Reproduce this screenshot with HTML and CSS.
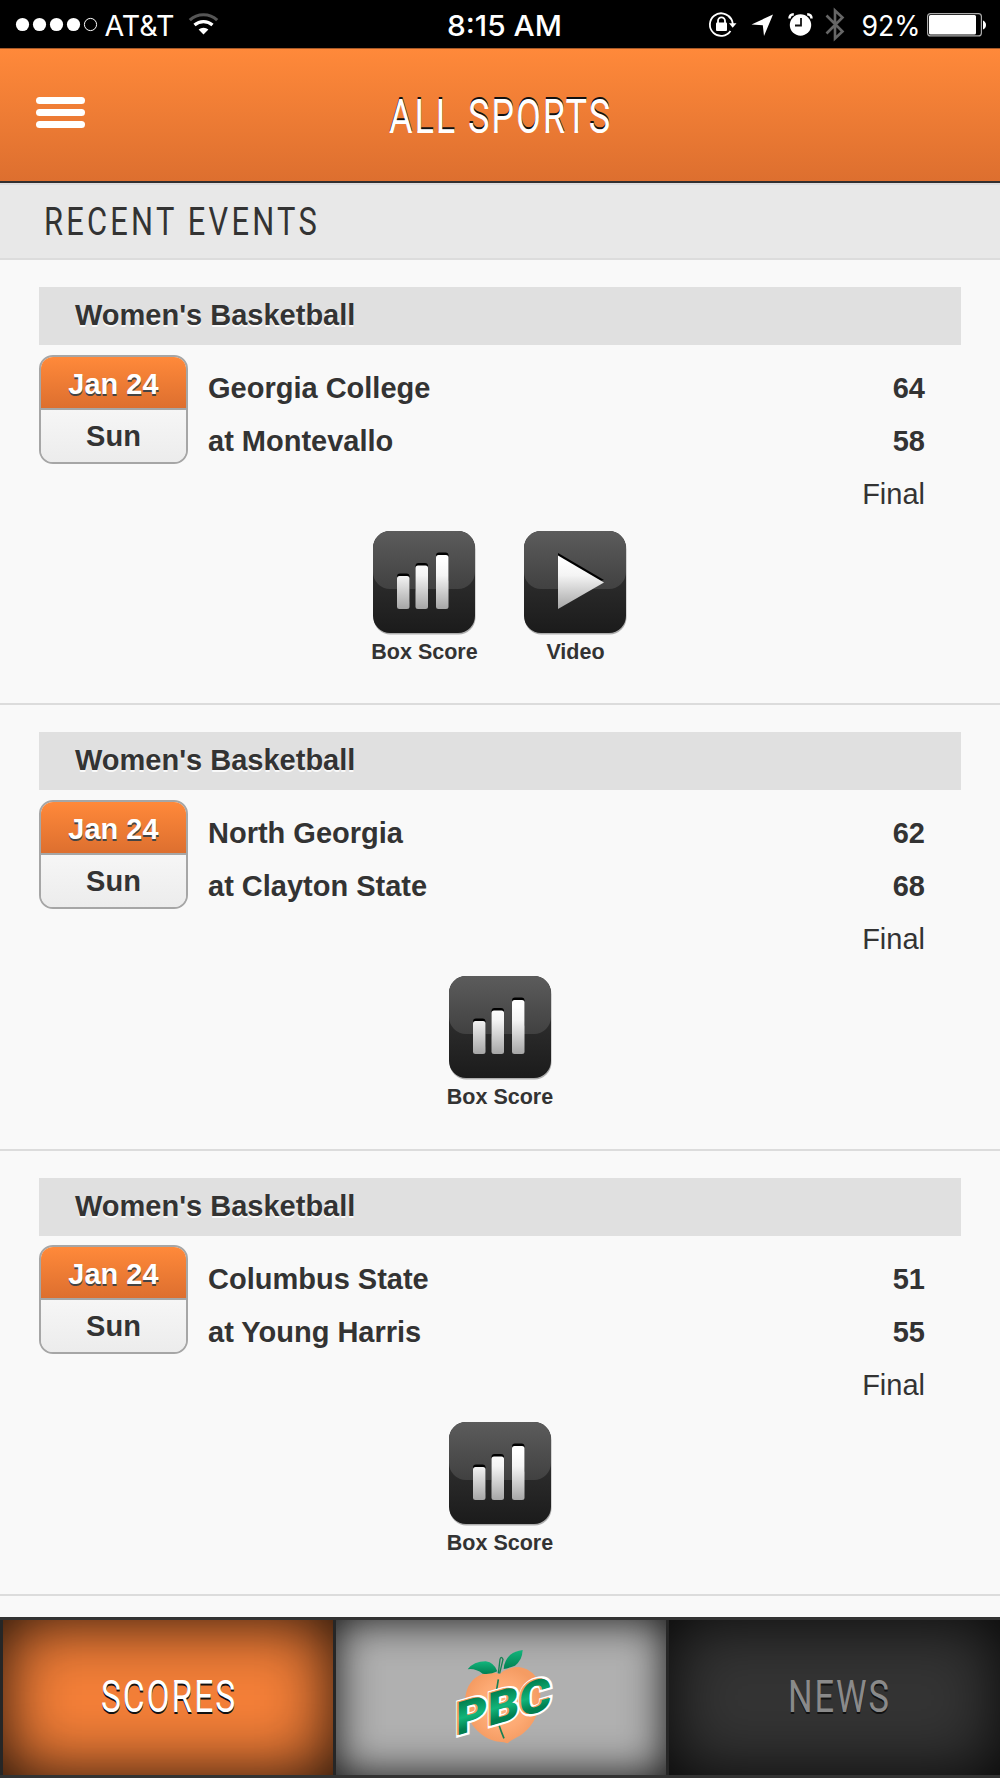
FILE: index.html
```html
<!DOCTYPE html>
<html lang="en">
<head>
<meta charset="utf-8">
<title>All Sports</title>
<link rel="stylesheet" href="styles.css">
</head>
<body>
<svg class="defs" width="0" height="0" aria-hidden="true">
  <defs>
    <linearGradient id="tile-low" x1="0" y1="0" x2="0" y2="1"><stop offset=".5" stop-color="#2b2b2b"/><stop offset="1" stop-color="#1b1b1b"/></linearGradient>
    <linearGradient id="tile-gloss" x1="0" y1="0" x2="0" y2="1"><stop offset=".25" stop-color="#5c5c5c"/><stop offset="1" stop-color="#414141"/></linearGradient>
    <linearGradient id="metal" gradientUnits="userSpaceOnUse" x1="0" y1="30" x2="0" y2="78"><stop offset="0" stop-color="#fff"/><stop offset=".3" stop-color="#f4f4f4"/><stop offset="1" stop-color="#a6a6a6"/></linearGradient>
    <clipPath id="tile-clip"><rect width="102" height="102" rx="17"/></clipPath>
    <g id="tile">
      <rect x=".5" y="1.500" width="102" height="102" rx="17" fill="#000" opacity=".3"/>
      <rect width="102" height="102" rx="17" fill="url(#tile-low)"/>
      <rect y="-20" width="102" height="78" rx="17" fill="url(#tile-gloss)" clip-path="url(#tile-clip)"/>
    </g>
    <symbol id="box-score" viewBox="0 0 104 105">
      <use href="#tile"/>
      <g fill="#000"><rect x="24" y="42.500" width="12.500" height="30" rx="3"/><rect x="42.500" y="32" width="12.500" height="30" rx="3"/><rect x="63" y="21.500" width="12.500" height="30" rx="3"/></g>
      <g fill="url(#metal)"><rect x="24" y="45" width="12.500" height="33" rx="2.500"/><rect x="42.500" y="34.500" width="12.500" height="43.500" rx="2.500"/><rect x="63" y="24" width="12.500" height="54" rx="2.500"/></g>
    </symbol>
    <symbol id="video" viewBox="0 0 104 105">
      <use href="#tile"/>
      <path d="M34 22L80 49L34 60Z" fill="#000"/>
      <path d="M34 24.500L80 51.500L34 78Z" fill="url(#metal)"/>
    </symbol>
  </defs>
</svg>

<div class="status">
  <div class="status-left">
    <svg width="230" height="48">
      <g fill="#fff"><circle cx="22.500" cy="24.500" r="6.600"/><circle cx="39.500" cy="24.500" r="6.600"/><circle cx="56.500" cy="24.500" r="6.600"/><circle cx="73.500" cy="24.500" r="6.600"/></g>
      <circle cx="90.500" cy="24.500" r="6.100" fill="none" stroke="#fff" stroke-width="1"/>
      <text class="st" x="104.500" y="35.500" textLength="70" lengthAdjust="spacingAndGlyphs">AT&amp;T</text>
      <g fill="none" stroke="#fff" stroke-width="3.200"><path d="M189.800 20.200A20 20 0 0 1 217.200 20.200" stroke="#555"/><path d="M194.500 25A13.500 13.500 0 0 1 212.500 25"/></g>
      <path d="M198.600 29.500A7.500 7.500 0 0 1 208.400 29.500L203.500 34.500Z" fill="#fff"/>
    </svg>
  </div>
  <svg width="130" height="48"><text class="st st-time" x="12" y="35.500" textLength="115" lengthAdjust="spacingAndGlyphs">8:15 AM</text></svg>
  <div class="status-right">
    <svg width="300" height="48">
      <g transform="translate(-700)">
        <path d="M731 19A11.300 11.300 0 1 0 730.500 31" fill="none" stroke="#fff" stroke-width="1.800"/>
        <path d="M728.500 16A11.300 11.300 0 0 1 732.800 24" fill="none" stroke="#fff" stroke-width="1.800"/>
        <path d="M729 23.300H736.500L732.700 27.700Z" fill="#fff"/>
        <rect x="716" y="22.500" width="11" height="8.500" rx="1" fill="#fff"/>
        <path d="M718 23V20.800A3.500 3.500 0 0 1 725 20.800V23" fill="none" stroke="#fff" stroke-width="1.800"/>
        <path d="M773 14.500L764 36L762.800 25.300L751.500 24.400Z" fill="#fff"/>
        <circle cx="800.500" cy="25" r="10.700" fill="#fff"/>
        <path d="M789.500 18.500Q789.500 14.500 793.800 14.200M811.500 18.500Q811.500 14.500 807.200 14.200" fill="none" stroke="#fff" stroke-width="2.500"/>
        <path d="M801 18V25.500H795" fill="none" stroke="#111" stroke-width="1.800"/>
        <path d="M826.500 15.500L842.500 31.500L835 38.500V10.500L842.500 17.500L826.500 33.500" fill="none" stroke="#666" stroke-width="2.600"/>
        <text class="st" x="861.500" y="35.500" textLength="59" lengthAdjust="spacingAndGlyphs">92%</text>
        <rect x="927.600" y="13.600" width="53.800" height="22.300" rx="3" fill="none" stroke="#aaa" stroke-width="1.200"/>
        <rect x="929" y="15" width="47" height="19.500" rx="1.500" fill="#fff"/>
        <path d="M983 20.500Q986 22 986 25Q986 28 983 29.500Z" fill="#fff"/>
      </g>
    </svg>
  </div>
</div>

<header class="header">
  <button class="menu" aria-label="Menu"><i></i><i></i><i></i></button>
  <svg class="title" width="230" height="60"><text class="narrow t-title" x="4" y="46.500" textLength="223" lengthAdjust="spacingAndGlyphs">ALL SPORTS</text></svg>
</header>

<div class="section"><svg width="290" height="50"><text class="narrow t-section" x="4" y="37.500" textLength="276" lengthAdjust="spacingAndGlyphs">RECENT EVENTS</text></svg></div>

<main class="events">
  <article class="event">
    <h2 class="sport">Women's Basketball</h2>
    <div class="game">
      <div class="date"><div class="day">Jan 24</div><div class="weekday">Sun</div></div>
      <div class="teams"><div>Georgia College</div><div>at Montevallo</div></div>
      <div class="result"><div>64</div><div>58</div><div class="final">Final</div></div>
    </div>
    <div class="links links-pair">
      <a class="link"><svg width="104" height="105"><use href="#box-score"/></svg>Box Score</a>
      <a class="link"><svg width="104" height="105"><use href="#video"/></svg>Video</a>
    </div>
  </article>
  <article class="event">
    <h2 class="sport">Women's Basketball</h2>
    <div class="game">
      <div class="date"><div class="day">Jan 24</div><div class="weekday">Sun</div></div>
      <div class="teams"><div>North Georgia</div><div>at Clayton State</div></div>
      <div class="result"><div>62</div><div>68</div><div class="final">Final</div></div>
    </div>
    <div class="links"><a class="link"><svg width="104" height="105"><use href="#box-score"/></svg>Box Score</a></div>
  </article>
  <article class="event">
    <h2 class="sport">Women's Basketball</h2>
    <div class="game">
      <div class="date"><div class="day">Jan 24</div><div class="weekday">Sun</div></div>
      <div class="teams"><div>Columbus State</div><div>at Young Harris</div></div>
      <div class="result"><div>51</div><div>55</div><div class="final">Final</div></div>
    </div>
    <div class="links"><a class="link"><svg width="104" height="105"><use href="#box-score"/></svg>Box Score</a></div>
  </article>
</main>

<nav class="tabs">
  <a class="tab tab-scores"><svg width="150" height="60"><text class="narrow t-tab" x="8" y="46" textLength="136" lengthAdjust="spacingAndGlyphs">SCORES</text></svg></a>
  <a class="tab tab-logo">
    <svg width="140" height="130" viewBox="0 0 420 390">
      <defs>
        <radialGradient id="peach"><stop offset="0" stop-color="#ffb583"/><stop offset=".6" stop-color="#fdaa74"/><stop offset="1" stop-color="#f59c63"/></radialGradient>
        <linearGradient id="leaf" x1="0" y1="0" x2="0" y2="1"><stop offset="0" stop-color="#12b57c"/><stop offset="1" stop-color="#028052"/></linearGradient>
        <linearGradient id="letters" x1="0" y1="0" x2="0" y2="1"><stop offset=".2" stop-color="#028050"/><stop offset=".5" stop-color="#12b57a"/><stop offset=".72" stop-color="#028050"/></linearGradient>
      </defs>
      <path d="M206 132C180 124 160 128 142 138C100 160 94 220 112 262C128 302 170 334 205 335Q220 335 229 340Q242 330 258 322C310 294 330 240 328 180C326 138 292 110 255 111Q226 115 206 132Z" fill="url(#peach)"/>
      <path d="M202 148Q186 220 205 288Q210 304 219 325" fill="none" stroke="#188053" stroke-width="5"/>
      <path d="M110 118Q128 94 164 94Q190 98 199 124Q180 134 155 131Q132 114 110 118Z" fill="url(#leaf)"/>
      <path d="M275 60Q274 90 252 107Q234 114 218 117Q219 92 238 74Q252 64 275 60Z" fill="url(#leaf)"/>
      <path d="M202 130L207 88Q210 76 216 88L206 130" fill="none" stroke="#188053" stroke-width="4"/>
      <g transform="translate(75 317) skewY(-16)" class="pbc">
        <text class="pbc-edge" x="0" y="0" textLength="286" lengthAdjust="spacingAndGlyphs">PBC</text>
        <text class="pbc-shade" x="-4" y="-2" textLength="286" lengthAdjust="spacingAndGlyphs">PBC</text>
        <text class="pbc-face" x="0" y="0" textLength="286" lengthAdjust="spacingAndGlyphs">PBC</text>
      </g>
    </svg>
  </a>
  <a class="tab tab-news"><svg width="120" height="60"><text class="narrow t-tab" x="9" y="46" textLength="103" lengthAdjust="spacingAndGlyphs">NEWS</text></svg></a>
</nav>
</body>
</html>
```
FILE: styles.css
```css
* { box-sizing: border-box; }
body {
  margin: 0;
  width: 1000px;
  height: 1778px;
  overflow: hidden;
  display: flex;
  flex-direction: column;
  background: #f9f9f9;
  color: #333;
  font-family: "Liberation Sans", Arial, sans-serif;
}
svg { display: block; flex: none; overflow: visible; }
.defs { position: absolute; }

.status {
  height: 48px;
  flex: none;
  display: grid;
  grid-template-columns: 435px 130px 435px;
  background: #000;
}
.status-right { display: flex; justify-content: flex-end; }
.st { font: 400 29px Inter, sans-serif; fill: #fff; }
.st-time { font-weight: 500; }

.header {
  height: 135px;
  flex: none;
  display: grid;
  grid-template-columns: 385px 230px 385px;
  align-items: start;
  background: linear-gradient(#ff893a, #dd6f2f);
  border-top: 1px solid #a85a28;
  border-bottom: 2px solid #332f2f;
}
.menu {
  display: flex;
  flex-direction: column;
  gap: 5px;
  width: 49px;
  margin: 48px 0 0 36px;
  padding: 0;
  border: 0;
  background: none;
}
.menu i { height: 7px; border-radius: 4px; background: #fff; }
.title { margin-top: 37px; }
.narrow { font-family: Roboto, sans-serif; fill: #333; }
.t-title { font-size: 48px; font-weight: 400; letter-spacing: 2.500px; fill: #fff; text-shadow: 0 -2px 0 #111; }
.t-section { font-size: 38px; font-weight: 400; letter-spacing: 4px; fill: #333; }
.t-tab { font-size: 44.500px; font-weight: 400; letter-spacing: 2.500px; fill: #fff; text-shadow: 0 2px 0 #111; }
.tab-news .t-tab { fill: #8a8a8a; }

.section {
  height: 77px;
  flex: none;
  display: flex;
  align-items: flex-start;
  padding: 12px 0 0 40px;
  background: #e8e8e8;
  border-top: 2px solid #dcdcde;
  border-bottom: 2px solid #dcdcdc;
}

.events { flex: 1; min-height: 0; overflow: hidden; }
.event { height: 445.500px; padding: 27px 39px 0; border-bottom: 2px solid #dcdcdc; }
.event:first-child { height: 445px; }
.sport {
  height: 58px;
  margin: 0;
  padding-left: 36px;
  font-size: 29px;
  line-height: 57px;
  background: #e0e0e0;
  text-shadow: 0 2px 0 #f9f9f9;
}
.game { display: flex; height: 186px; padding-top: 9.500px; font-size: 29px; font-weight: 700; }
.date {
  width: 149px;
  height: 109px;
  overflow: hidden;
  text-align: center;
  border: 2px solid #a6a6a6;
  border-radius: 14px;
}
.day {
  height: 53px;
  line-height: 54px;
  color: #fff;
  background: linear-gradient(#ff893a, #dd6f2f);
  border-bottom: 2px solid #a6a6a6;
  text-shadow: 0 2px 0 #444;
}
.weekday { height: 52px; line-height: 53px; background: linear-gradient(#f6f6f6, #ececec); }
.teams { flex: 1; padding: 7.500px 0 0 20px; line-height: 53px; }
.result { padding: 7.500px 36px 0 0; line-height: 53px; text-align: right; }
.final { font-weight: 400; }
.links { display: flex; justify-content: center; }
.link {
  width: 151px;
  display: flex;
  flex-direction: column;
  align-items: center;
  font-size: 21.500px;
  font-weight: 700;
  line-height: 32px;
}
.link svg { margin-left: 2px; }
.links-pair svg { margin-left: 1px; }

.tabs {
  height: 161px;
  flex: none;
  display: grid;
  grid-template-columns: 330px 330px 1fr;
  gap: 3px;
  padding-left: 3px;
  background: #262626;
  border-top: 3px solid #333;
  border-bottom: 3px solid #333;
}
.tab { display: flex; justify-content: center; align-items: flex-start; }
.tab-scores { background: #f47f38; box-shadow: inset 0 0 66px rgba(0, 0, 0, .92); }
.tab-logo { background: #b0b0b0; box-shadow: inset 0 0 42px rgba(0, 0, 0, .9); }
.tab-news { background: #343434; box-shadow: inset 0 0 66px rgba(0, 0, 0, .9); }
.tab-scores svg, .tab-news svg { margin-top: 46px; }
.tab-news svg { margin-left: 9px; }
.tab-logo svg { margin-top: 10px; }
.pbc text { font: 900 138px Roboto, sans-serif; }
.pbc .pbc-edge { fill: #fff; stroke: #fff; stroke-width: 14px; }
.pbc .pbc-shade { fill: #f79a5e; stroke: #f79a5e; stroke-width: 2px; }
.pbc .pbc-face { fill: url(#letters); }
```
